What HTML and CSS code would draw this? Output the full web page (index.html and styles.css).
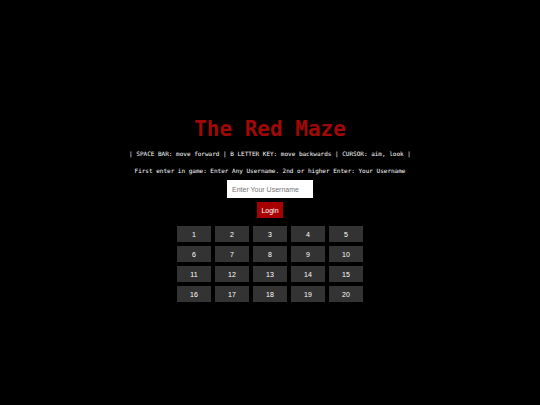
FILE: index.html
```html
<!DOCTYPE html>
<html lang="en">
<head>
<meta charset="utf-8">
<title>The Red Maze</title>
<link rel="stylesheet" href="styles.css">
</head>
<body>
<main class="login">
  <h1 class="title">The Red Maze</h1>
  <div class="hints">
    <p class="hint">| SPACE BAR: move forward | B LETTER KEY: move backwards | CURSOR: aim, look |</p>
    <p class="hint">First enter in game: Enter Any Username. 2nd or higher Enter: Your Username</p>
  </div>
  <form class="form">
    <input class="username" type="text" placeholder="Enter Your Username" aria-label="Username">
    <button class="submit" type="button">Login</button>
  </form>
  <div class="levels">
    <button class="level" type="button">1</button>
    <button class="level" type="button">2</button>
    <button class="level" type="button">3</button>
    <button class="level" type="button">4</button>
    <button class="level" type="button">5</button>
    <button class="level" type="button">6</button>
    <button class="level" type="button">7</button>
    <button class="level" type="button">8</button>
    <button class="level" type="button">9</button>
    <button class="level" type="button">10</button>
    <button class="level" type="button">11</button>
    <button class="level" type="button">12</button>
    <button class="level" type="button">13</button>
    <button class="level" type="button">14</button>
    <button class="level" type="button">15</button>
    <button class="level" type="button">16</button>
    <button class="level" type="button">17</button>
    <button class="level" type="button">18</button>
    <button class="level" type="button">19</button>
    <button class="level" type="button">20</button>
  </div>
</main>
</body>
</html>
```
FILE: styles.css
```css
* {
  box-sizing: border-box;
}

body {
  margin: 0;
  padding-top: 14px;
  min-height: 100vh;
  display: flex;
  align-items: center;
  justify-content: center;
  background: #000;
  color: #fff;
  font-family: "DejaVu Sans Mono", monospace;
}

.login {
  display: flex;
  flex-direction: column;
  align-items: center;
  text-align: center;
}

.title {
  margin: 0 0 9px;
  color: #a00808;
  font-size: 21px;
  line-height: 24px;
}

.hints {
  display: flex;
  flex-direction: column;
  gap: 9px;
  margin-bottom: 5px;
}

.hint {
  margin: 0;
  font-size: 6px;
  line-height: 8px;
}

.form {
  display: flex;
  flex-direction: column;
  align-items: center;
  gap: 4px;
}

.username,
.submit,
.level {
  border: 0;
  padding: 0 4px;
  font-family: "Liberation Sans", sans-serif;
  font-size: 7px;
}

.username {
  width: 86px;
  height: 18px;
  padding: 0 5px;
  background: #fff;
}

.username::placeholder {
  color: #757575;
}

.submit {
  height: 16px;
  background: #a80000;
  color: #fff;
}

.levels {
  display: grid;
  grid-template-columns: repeat(5, 34px);
  gap: 4px;
  margin-top: 8px;
}

.level {
  height: 16px;
  background: #333;
  color: #fff;
}
```
